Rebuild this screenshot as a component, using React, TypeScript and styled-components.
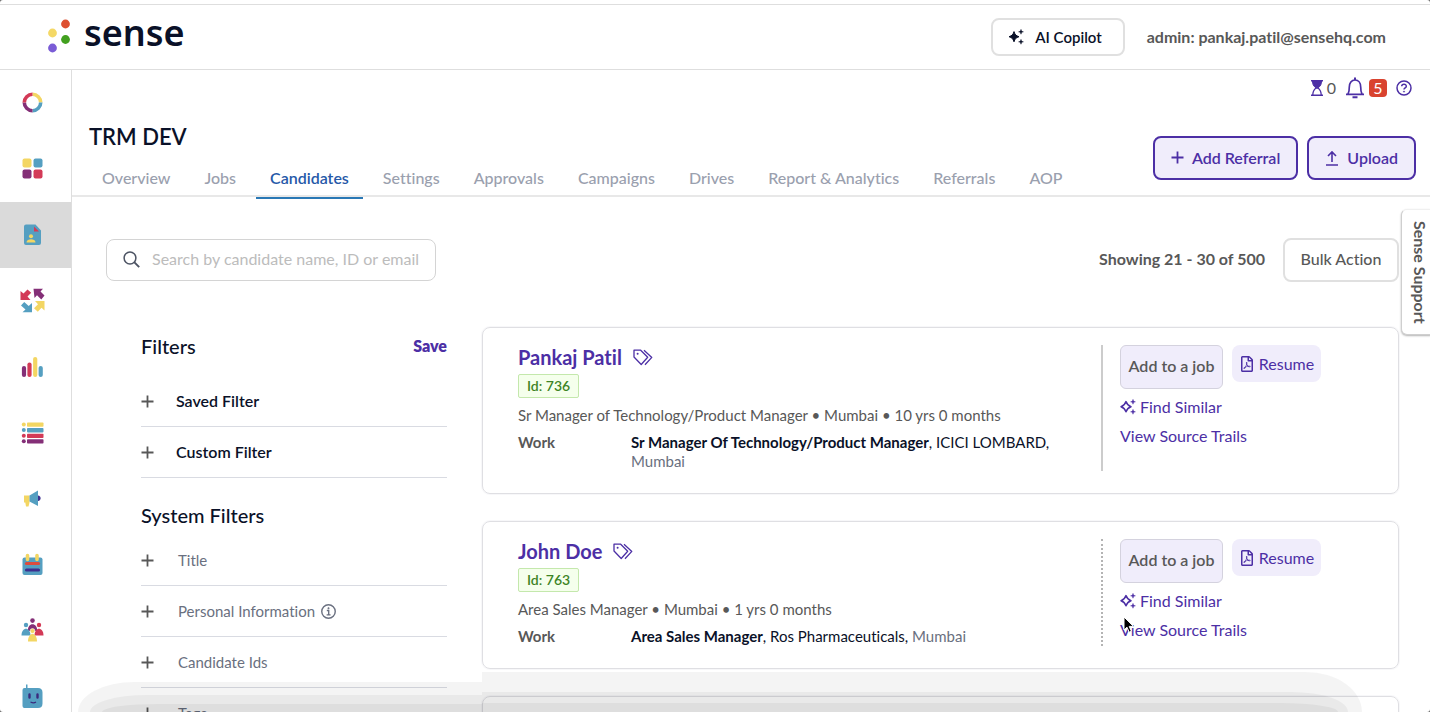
import React from "react";
import styled, { createGlobalStyle, css } from "styled-components";
import { FaRegFilePdf } from "react-icons/fa";

const GlobalStyle = createGlobalStyle`
  *, *::before, *::after { box-sizing: border-box; }
  body {
    margin: 0;
    background: #6b6b6b;
    color: #585858;
    font-family: Lato, "Liberation Sans", sans-serif;
    font-size: 16px;
    font-variant-ligatures: none;
    line-height: 20px;
  }
  button, input { font: inherit; color: inherit; font-variant-ligatures: none; }
  button { cursor: pointer; margin: 0; }
  a { text-decoration: none; color: inherit; }
  h1, h2, h3, p, ul, dl, dd { margin: 0; padding: 0; font-weight: inherit; }
  svg { display: block; flex: none; }
`;

const ink = "#0a1128";
const purple = "#4c2fa5";

const Shell = styled.div`
  position: relative;
  display: flex;
  flex-direction: column;
  height: 100vh;
  overflow: hidden;
  background: #fff;
  border-radius: 3px;
`;

const Header = styled.header`
  display: flex;
  align-items: center;
  flex: none;
  height: 66px;
  margin-top: 4px;
  padding: 0 44px 0 46px;
  border-top: 1px solid #dedede;
  border-bottom: 1px solid #dedede;
`;

const Brand = styled.a`
  display: flex;
  align-items: center;
  gap: 12px;
  margin-right: auto;
  color: ${ink};
  font-family: "Noto Sans", sans-serif;
  font-size: 36px;
  font-weight: 600;
  line-height: 40px;
  span { margin-bottom: 8px; }
`;

const CopilotButton = styled.button`
  display: flex;
  align-items: center;
  gap: 11px;
  height: 38px;
  padding: 0 21px 0 15px;
  margin-right: 22px;
  background: #fff;
  border: 2px solid #e0e0e0;
  border-radius: 8px;
  color: ${ink};
  font-size: 15px;
  font-weight: 600;
`;

const Account = styled.span`
  font-weight: 700;
`;

const Body = styled.div`
  display: flex;
  flex: 1;
  min-height: 0;
`;

const Sidebar = styled.nav`
  flex: none;
  width: 72px;
  border-right: 1px solid #dedede;
  overflow: hidden;
`;

const SideLink = styled.a<{ $active?: boolean }>`
  display: flex;
  align-items: center;
  height: 66px;
  padding: 0 0 2px 20px;
  background: ${(p) => (p.$active ? "#dadada" : "transparent")};
`;

const Main = styled.main`
  flex: 1;
  min-width: 0;
  overflow: hidden;
`;

const StatusBar = styled.div`
  display: flex;
  justify-content: flex-end;
  align-items: center;
  height: 35px;
  padding-right: 18px;
`;

const StatusButton = styled.button`
  display: flex;
  align-items: center;
  gap: 4px;
  padding: 0;
  margin-left: 9px;
  border: 0;
  background: none;
  color: ${purple};
  small { font-size: 16px; color: #585858; }
`;

const Count = styled.span`
  width: 18px;
  border-radius: 4px;
  background: #d9432f;
  color: #fff;
  line-height: 18px;
  text-align: center;
`;

const TitleBar = styled.div`
  display: flex;
  justify-content: space-between;
  align-items: flex-start;
  height: 92px;
  padding: 0 14px 0 16px;
  border-bottom: 2px solid #e8e8e8;
`;

const PageTitle = styled.h1`
  padding: 16px 1px 0;
  color: ${ink};
  font-size: 22px;
  font-weight: 600;
  line-height: 32px;
`;

const Tabs = styled.nav`
  display: flex;
  gap: 6px;
`;

const Tab = styled.a<{ $active?: boolean }>`
  height: 46px;
  padding: 15px 14px 0;
  border-bottom: 2px solid ${(p) => (p.$active ? "#2a78b5" : "transparent")};
  color: ${(p) => (p.$active ? "#2659a8" : "#9aa0ae")};
  font-weight: ${(p) => (p.$active ? 600 : 500)};
  white-space: nowrap;
`;

const HeadActions = styled.div`
  display: flex;
  gap: 9px;
  padding-top: 31px;
`;

const PrimaryButton = styled.button`
  display: flex;
  align-items: center;
  gap: 8px;
  height: 44px;
  padding: 0 16px 1px;
  background: #f0edfb;
  border: 2px solid ${purple};
  border-radius: 8px;
  color: ${purple};
  font-weight: 600;
  white-space: nowrap;
`;

const Toolbar = styled.div`
  display: flex;
  align-items: center;
  padding: 41px 31px 0 34px;
`;

const SearchBox = styled.label`
  display: flex;
  align-items: center;
  gap: 12px;
  width: 330px;
  height: 42px;
  margin-right: auto;
  padding: 0 16px 2px;
  border: 1px solid #d4d4d4;
  border-radius: 8px;
  color: #4d5464;
  input {
    flex: 1;
    min-width: 0;
    padding: 0;
    border: 0;
    outline: 0;
    background: none;
  }
  input::placeholder { color: #bcbcbc; opacity: 1; }
`;

const ResultCount = styled.span`
  margin-right: 18px;
  padding-bottom: 2px;
  font-weight: 700;
`;

const BulkButton = styled.button`
  width: 116px;
  height: 44px;
  padding: 0 0 2px;
  background: #fff;
  border: 2px solid #e0e0e0;
  border-radius: 8px;
  font-weight: 500;
`;

const Columns = styled.div`
  display: flex;
  align-items: flex-start;
  gap: 35px;
  padding: 45px 31px 0 69px;
`;

const Filters = styled.aside`
  flex: none;
  width: 306px;
  padding-top: 7px;
`;

const FilterHead = styled.div`
  display: flex;
  justify-content: space-between;
  align-items: center;
  height: 24px;
  margin-bottom: 18px;
`;

const FilterTitle = styled.h2`
  color: ${ink};
  font-size: 20px;
  font-weight: 500;
`;

const SaveButton = styled.button`
  padding: 0;
  border: 0;
  background: none;
  color: ${purple};
  font-weight: 800;
`;

const FilterGroup = styled.div`
  margin-bottom: 27px;
  & + h2 { margin-bottom: 10px; }
`;

const FilterRow = styled.button<{ $strong?: boolean }>`
  display: flex;
  align-items: center;
  width: 100%;
  height: 51px;
  padding: 0;
  border: 0;
  border-bottom: 1px solid #d9dbe2;
  background: none;
  color: ${(p) => (p.$strong ? ink : "#6a7080")};
  font-size: ${(p) => (p.$strong ? 16 : 15)}px;
  font-weight: ${(p) => (p.$strong ? 600 : 400)};
  svg:first-child { margin-right: ${(p) => (p.$strong ? 22 : 24)}px; color: #585858; }
  svg:last-child:not(:first-child) { margin-left: 6px; }
`;

const Results = styled.section`
  display: flex;
  flex: 1;
  flex-direction: column;
  gap: 27px;
  min-width: 0;
`;

const Card = styled.article`
  display: flex;
  padding: 17px 0 22px 35px;
  border: 1px solid #dfdfe3;
  border-radius: 8px;
  box-shadow: 0 0 1px 1px #f7f7f9;
`;

const Profile = styled.div`
  flex: 1;
  min-width: 0;
`;

const NameRow = styled.div`
  display: flex;
  align-items: center;
  gap: 11px;
  height: 24px;
  color: ${purple};
`;

const Name = styled.a`
  font-size: 20px;
  font-weight: 700;
`;

const IdBadge = styled.span`
  display: inline-block;
  height: 24px;
  margin: 5px 0 7px;
  padding: 0 8px;
  border: 1px solid #c4e8ac;
  border-radius: 2px;
  background: #f5ffec;
  color: #3e8426;
  font-size: 14px;
  font-weight: 600;
  line-height: 22px;
  vertical-align: top;
`;

const Summary = styled.p`
  margin-bottom: 8px;
  font-size: 15px;
`;

const Facts = styled.dl`
  display: grid;
  grid-template-columns: 113px 1fr;
  font-size: 15px;
  line-height: 19px;
  dt { font-weight: 700; }
  dd { color: #6a7080; }
  dd span { color: ${ink}; }
  dd b { color: ${ink}; font-weight: 700; }
`;

const Actions = styled.div<{ $dotted?: boolean }>`
  flex: none;
  width: 297px;
  padding-left: 17px;
  border-left: 2px ${(p) => (p.$dotted ? "dotted #b4b4b4" : "solid #cccccc")};
`;

const ActionRow = styled.div`
  display: flex;
  align-items: flex-start;
  gap: 9px;
  margin-bottom: 8px;
`;

const AddButton = styled.button`
  width: 103px;
  height: 44px;
  padding: 0 0 2px;
  border: 1px solid #d4d2de;
  border-radius: 6px;
  background: #f0edfb;
  font-weight: 600;
  white-space: nowrap;
`;

const ResumeButton = styled.button`
  display: flex;
  align-items: center;
  justify-content: center;
  gap: 4px;
  width: 89px;
  height: 37px;
  padding: 0;
  border: 0;
  border-radius: 8px;
  background: #f0edfb;
  color: ${purple};
`;

const ActionLink = styled.a`
  display: flex;
  align-items: center;
  gap: 4px;
  height: 20px;
  margin-bottom: 9px;
  color: ${purple};
  &:last-child { margin-bottom: 0; }
`;

const SupportTab = styled.button`
  position: absolute;
  top: 209px;
  right: -1px;
  width: 30px;
  height: 126px;
  padding: 0 0 0 10px;
  border: 1px solid #cfcfcf;
  border-top-color: #f0f0f0;
  border-radius: 6px 0 0 6px;
  background: #fff;
  box-shadow: 0 1px 2px rgba(0, 0, 0, 0.3);
  font-weight: 700;
  writing-mode: vertical-rl;
  text-align: center;
  white-space: nowrap;
`;

const Cursor = styled.svg`
  position: absolute;
  left: 1123px;
  top: 616px;
`;

const shade = css`
  position: absolute;
  bottom: 0;
  background: rgba(0, 0, 0, 0.045);
  pointer-events: none;
`;

const ShadeLeft = styled.div<{ $x: number; $h: number }>`
  ${shade}
  left: ${(p) => p.$x}px;
  width: ${(p) => 482 - p.$x}px;
  height: ${(p) => p.$h}px;
  border-top-left-radius: 56px ${(p) => p.$h}px;
`;

const ShadeRight = styled.div<{ $x: number; $h: number }>`
  ${shade}
  left: 482px;
  right: ${(p) => p.$x}px;
  height: ${(p) => p.$h}px;
  border-top-right-radius: 56px ${(p) => p.$h}px;
`;

const LogoMark = () => (
  <svg width="26" height="36" viewBox="0 0 26 36" aria-hidden="true">
    <circle cx="19.5" cy="5" r="4.4" fill="#dd4f30" />
    <circle cx="6.5" cy="14" r="4.4" fill="#f4d866" />
    <circle cx="19.5" cy="20.5" r="4.4" fill="#42a01f" />
    <circle cx="6.5" cy="29" r="4.4" fill="#7a5cd6" />
  </svg>
);

const Sparkles = ({ filled }: { filled?: boolean }) => (
  <svg width="16" height="16" viewBox="0 0 16 16" fill={filled ? "currentColor" : "none"} stroke="currentColor" strokeWidth={filled ? 1 : 1.5} strokeLinejoin="round" aria-hidden="true">
    <path d="M6 2.6C7 5.7 7.900 6.700 11 7.700 7.900 8.700 7 9.700 6 12.800 5 9.700 4.100 8.700 1 7.700 4.100 6.700 5 5.700 6 2.600Z" />
    <path fill="currentColor" strokeWidth="0.5" d="M13 .4c.3 1.500.8 2 2.400 2.400-1.600.4-2.100.9-2.400 2.400-.3-1.500-.8-2-2.400-2.400C12.200 2.400 12.700 1.900 13 .4ZM13 10.400c.3 1.500.8 2 2.400 2.400-1.600.4-2.100.9-2.400 2.400-.3-1.500-.8-2-2.400-2.400 1.600-.4 2.100-.9 2.400-2.400Z" />
  </svg>
);

const Hourglass = () => (
  <svg width="12" height="16" viewBox="0 0 12 16" fill="none" stroke="currentColor" aria-hidden="true">
    <path d="M0 .8h12M0 15.200h12" strokeWidth="1.600" />
    <path d="M1.500 1h9c0 3.500-1 5-3.300 6.800H4.800C2.500 6 1.500 4.500 1.500 1Z" fill="currentColor" />
    <path d="M1.800 15c0-3.500 1-5.200 3.200-7h2c2.200 1.800 3.200 3.500 3.200 7" strokeWidth="1.300" />
  </svg>
);

const Bell = () => (
  <svg width="20" height="22" viewBox="0 0 20 22" fill="none" stroke="currentColor" strokeWidth="1.700" aria-hidden="true">
    <path d="M1 17.400h18M3 17c1.100-1.700 1.300-3 1.300-7C4.300 6 6.500 3 10 3s5.700 3 5.700 7c0 4 .2 5.300 1.300 7" />
    <path d="M10 .5V3M7.500 20.300h5" strokeWidth="2" />
  </svg>
);

const Help = () => (
  <svg width="16" height="16" viewBox="0 0 16 16" fill="none" stroke="currentColor" strokeWidth="1.500" aria-hidden="true">
    <circle cx="8" cy="8" r="7" />
    <path d="M5.700 6.300c.2-3 4.700-2.700 4.600 0 0 1.600-2.300 1.600-2.300 3.300" />
    <circle cx="8" cy="11.600" r=".6" fill="currentColor" strokeWidth=".6" />
  </svg>
);

const Info = () => (
  <svg width="15" height="15" viewBox="0 0 16 16" fill="none" stroke="currentColor" strokeWidth="1.500" aria-hidden="true">
    <circle cx="8" cy="8" r="7.200" />
    <path d="M6.200 7h2v4.300M6 11.600h4.200" />
    <circle cx="8" cy="4.500" r=".8" fill="currentColor" strokeWidth=".6" />
  </svg>
);

const Tags = () => (
  <svg width="20" height="17" viewBox="0 0 20 17" fill="none" stroke="currentColor" strokeWidth="1.300" strokeLinejoin="round" aria-hidden="true">
    <path d="M1 1.200h6.700l7 7-6.500 7.300L1 8Z" />
    <path d="M11 1.200l7.800 7.200-6.800 7.300" />
    <circle cx="4.600" cy="4.800" r="1" fill="currentColor" stroke="none" />
  </svg>
);

const Plus = ({ size = 13 }: { size?: number }) => (
  <svg width={size} height={size} viewBox="0 0 13 13" stroke="currentColor" strokeWidth="1.800" aria-hidden="true">
    <path d="M6.500 .5v12M.5 6.500h12" />
  </svg>
);

const UploadIcon = () => (
  <svg width="14" height="16" viewBox="0 0 14 16" fill="none" stroke="currentColor" strokeWidth="1.600" aria-hidden="true">
    <path d="M7 12V2.500M3 6l4-4 4 4M1 15h12" />
  </svg>
);

const SearchIcon = () => (
  <svg width="17" height="17" viewBox="0 0 17 17" fill="none" stroke="currentColor" strokeWidth="1.500" aria-hidden="true">
    <circle cx="7" cy="7" r="5.900" />
    <path d="M11.200 11.200l5 5" strokeWidth="1.900" />
  </svg>
);

const Y = "#f3d663";
const B = "#559fc1";
const P = "#842f77";
const R = "#d33a57";

const sideIcons: { label: string; art: React.ReactNode }[] = [
  {
    label: "Home",
    art: (
      <g fill="none" strokeWidth="3.600">
        <path d="M12.500 4.300a8.200 8.200 0 0 1 8.200 8.200" stroke={Y} />
        <path d="M20.700 12.500a8.200 8.200 0 0 1-8.200 8.200" stroke={B} />
        <path d="M12.500 20.700a8.200 8.200 0 0 1-8.200-8.200" stroke={P} />
        <path d="M4.300 12.500a8.200 8.200 0 0 1 8.200-8.200" stroke={R} />
      </g>
    ),
  },
  {
    label: "Dashboard",
    art: (
      <>
        <rect x="2.500" y="2.500" width="9" height="9" rx="2" fill={Y} />
        <rect x="13.500" y="2.500" width="9" height="9" rx="2" fill={B} />
        <rect x="2.500" y="13.500" width="9" height="9" rx="2" fill={P} />
        <rect x="13.500" y="13.500" width="9" height="9" rx="2" fill={R} />
      </>
    ),
  },
  {
    label: "Candidates",
    art: (
      <>
        <path d="M6 2.500h9.500l5.500 6V21a2 2 0 0 1-2 2H6a2 2 0 0 1-2-2V4.500a2 2 0 0 1 2-2Z" fill={B} />
        <path d="M14 4.500l5 5h-5Z" fill={R} />
        <circle cx="11" cy="14.200" r="2" fill={Y} />
        <path d="M6.500 20.500c0-4.300 9-4.300 9 0Z" fill={Y} />
      </>
    ),
  },
  {
    label: "Matching",
    art: (
      <>
        <path d="M.5 12V3l3 2.500L7.500 1.500l3.700 3.200L7.500 8.500l3 3.500Z" fill={R} />
        <path d="M13.500 .8H23l-2.500 2.700 4 4-3.200 4-4.300-4.300-2.500 2.800Z" fill={P} />
        <path d="M24.500 13v9.500l-3-2.800-3.700 4-3.800-3.400 4-4-3-3.300Z" fill={Y} />
        <path d="M12 24.200H2.500l3-2.700L1 17.500 4.200 14l4.500 4 3.300-3Z" fill={B} />
      </>
    ),
  },
  {
    label: "Reports",
    art: (
      <g strokeWidth="4.200" strokeLinecap="round">
        <path d="M4 14v7" stroke={P} />
        <path d="M9.500 10.500V21" stroke={R} />
        <path d="M15.200 5v16" stroke={Y} />
        <path d="M20.700 14v7" stroke={B} />
      </g>
    ),
  },
  {
    label: "Lists",
    art: (
      <>
        {[Y, B, R, P].map((c, i) => (
          <g key={c} fill={c}>
            <circle cx="3.800" cy={4.500 + i * 5.600} r="2" />
            <rect x="7" y={2.500 + i * 5.600} width="16.500" height="4.300" rx=".8" />
          </g>
        ))}
      </>
    ),
  },
  {
    label: "Campaigns",
    art: (
      <>
        <path d="M4 9.500h5.500v7l-1 4H6l-.7-4H4Z" fill={Y} />
        <path d="M9.500 9.500L18 4.500v15.500l-8.500-4.500Z" fill={B} />
        <path d="M18 9.500c3.500.5 3.500 5 0 5.500Z" fill="#3d2f8f" />
      </>
    ),
  },
  {
    label: "Calendar",
    art: (
      <>
        <rect x="2.500" y="5.500" width="20" height="17.500" rx="2" fill={B} />
        <path d="M7.500 3.500v4M17 3.500v4" stroke={Y} strokeWidth="3.600" strokeLinecap="round" />
        <path d="M6.500 11.500h12" stroke="#dd4b3e" strokeWidth="3.200" strokeLinecap="round" />
        <path d="M6.500 18h12" stroke="#3d2f8f" strokeWidth="3.200" strokeLinecap="round" />
      </>
    ),
  },
  {
    label: "Teams",
    art: (
      <>
        <circle cx="12.500" cy="2.600" r="2.300" fill={P} />
        <path d="M8 13c-1-9 10-9 9 0Z" fill={P} />
        <circle cx="6" cy="7" r="2.200" fill={B} />
        <path d="M1.500 17.500c0-9 9-9 9 0Z" fill={B} />
        <circle cx="19" cy="7" r="2.200" fill={R} />
        <path d="M14.500 17.500c0-9 9-9 9 0Z" fill={R} />
        <circle cx="12.500" cy="13" r="2.400" fill={Y} stroke="#fff" strokeWidth=".6" />
        <path d="M8 23.500c0-10 9-10 9 0Z" fill={Y} />
      </>
    ),
  },
  {
    label: "Assistant",
    art: (
      <>
        <path d="M6 .5h1.500v3.500H18q4.500 0 4.500 4.500v11q0 4.500-4.500 4.500H4.500Q2.500 24 2.500 22V6q0-2 2-2H6Z" fill={B} />
        <path d="M9.500 10.500v3M17.500 10.500v3" stroke="#3b2b7d" strokeWidth="2.400" strokeLinecap="round" />
        <path d="M10.500 18c2 1 4 1 5.500 0" stroke="#3b2b7d" strokeWidth="1.200" fill="none" />
      </>
    ),
  },
];

const tabs = ["Overview", "Jobs", "Candidates", "Settings", "Approvals", "Campaigns", "Drives", "Report & Analytics", "Referrals", "AOP"];

interface Candidate {
  name: string;
  id: number;
  summary: string;
  role: string;
  company: string;
  city: string;
  dotted?: boolean;
}

const candidates: Candidate[] = [
  {
    name: "Pankaj Patil",
    id: 736,
    summary: "Sr Manager of Technology/Product Manager • Mumbai • 10 yrs 0 months",
    role: "Sr Manager Of Technology/Product Manager",
    company: "ICICI LOMBARD,",
    city: "Mumbai",
  },
  {
    name: "John Doe",
    id: 763,
    summary: "Area Sales Manager • Mumbai • 1 yrs 0 months",
    role: "Area Sales Manager",
    company: "Ros Pharmaceuticals,",
    city: "Mumbai",
    dotted: true,
  },
];

const CandidateCard = ({ c }: { c: Candidate }) => (
  <Card>
    <Profile>
      <NameRow>
        <Name href="#">{c.name}</Name>
        <Tags />
      </NameRow>
      <IdBadge>Id: {c.id}</IdBadge>
      <Summary>{c.summary}</Summary>
      <Facts>
        <dt>Work</dt>
        <dd>
          <b>{c.role}</b>
          <span>, {c.company}</span> {c.city}
        </dd>
      </Facts>
    </Profile>
    <Actions $dotted={c.dotted}>
      <ActionRow>
        <AddButton>Add to a job</AddButton>
        <ResumeButton>
          <FaRegFilePdf size={16} />
          Resume
        </ResumeButton>
      </ActionRow>
      <ActionLink href="#">
        <Sparkles />
        Find Similar
      </ActionLink>
      <ActionLink href="#">View Source Trails</ActionLink>
    </Actions>
  </Card>
);

export default function App() {
  return (
    <>
      <GlobalStyle />
      <Shell>
        <Header>
          <Brand href="#">
            <LogoMark />
            <span>sense</span>
          </Brand>
          <CopilotButton>
            <Sparkles filled />
            AI Copilot
          </CopilotButton>
          <Account>admin: pankaj.patil@sensehq.com</Account>
        </Header>
        <Body>
          <Sidebar>
            {sideIcons.map((item) => (
              <SideLink key={item.label} href="#" aria-label={item.label} $active={item.label === "Candidates"}>
                <svg width="25" height="25" viewBox="0 0 25 25" aria-hidden="true">
                  {item.art}
                </svg>
              </SideLink>
            ))}
          </Sidebar>
          <Main>
            <StatusBar>
              <StatusButton aria-label="Pending tasks">
                <Hourglass />
                <small>0</small>
              </StatusButton>
              <StatusButton aria-label="Notifications">
                <Bell />
                <Count>5</Count>
              </StatusButton>
              <StatusButton aria-label="Help">
                <Help />
              </StatusButton>
            </StatusBar>
            <TitleBar>
              <div>
                <PageTitle>TRM DEV</PageTitle>
                <Tabs>
                  {tabs.map((t) => (
                    <Tab key={t} href="#" $active={t === "Candidates"}>
                      {t}
                    </Tab>
                  ))}
                </Tabs>
              </div>
              <HeadActions>
                <PrimaryButton>
                  <Plus />
                  Add Referral
                </PrimaryButton>
                <PrimaryButton>
                  <UploadIcon />
                  Upload
                </PrimaryButton>
              </HeadActions>
            </TitleBar>
            <Toolbar>
              <SearchBox>
                <SearchIcon />
                <input type="text" aria-label="Search candidates" placeholder="Search by candidate name, ID or email" />
              </SearchBox>
              <ResultCount>Showing 21 - 30 of 500</ResultCount>
              <BulkButton>Bulk Action</BulkButton>
            </Toolbar>
            <Columns>
              <Filters>
                <FilterHead>
                  <FilterTitle>Filters</FilterTitle>
                  <SaveButton>Save</SaveButton>
                </FilterHead>
                <FilterGroup>
                  <FilterRow $strong>
                    <Plus />
                    Saved Filter
                  </FilterRow>
                  <FilterRow $strong>
                    <Plus />
                    Custom Filter
                  </FilterRow>
                </FilterGroup>
                <FilterTitle>System Filters</FilterTitle>
                <FilterGroup>
                  <FilterRow>
                    <Plus />
                    Title
                  </FilterRow>
                  <FilterRow>
                    <Plus />
                    Personal Information
                    <Info />
                  </FilterRow>
                  <FilterRow>
                    <Plus />
                    Candidate Ids
                  </FilterRow>
                  <FilterRow>
                    <Plus />
                    Tags
                  </FilterRow>
                </FilterGroup>
              </Filters>
              <Results>
                {candidates.map((c) => (
                  <CandidateCard key={c.id} c={c} />
                ))}
                <Card />
              </Results>
            </Columns>
          </Main>
        </Body>
        <SupportTab>Sense Support</SupportTab>
        <ShadeLeft $x={78} $h={30} />
        <ShadeLeft $x={90} $h={17} />
        <ShadeLeft $x={102} $h={8} />
        <ShadeRight $x={68} $h={40} />
        <ShadeRight $x={82} $h={20} />
        <ShadeRight $x={92} $h={9} />
        <Cursor width="12" height="18" viewBox="0 0 12 18" aria-hidden="true">
          <path d="M1 1v13l3-2.800 2.200 5 2.200-1-2.200-4.800h4.300Z" fill="#000" stroke="#fff" strokeWidth="1" />
        </Cursor>
      </Shell>
    </>
  );
}
